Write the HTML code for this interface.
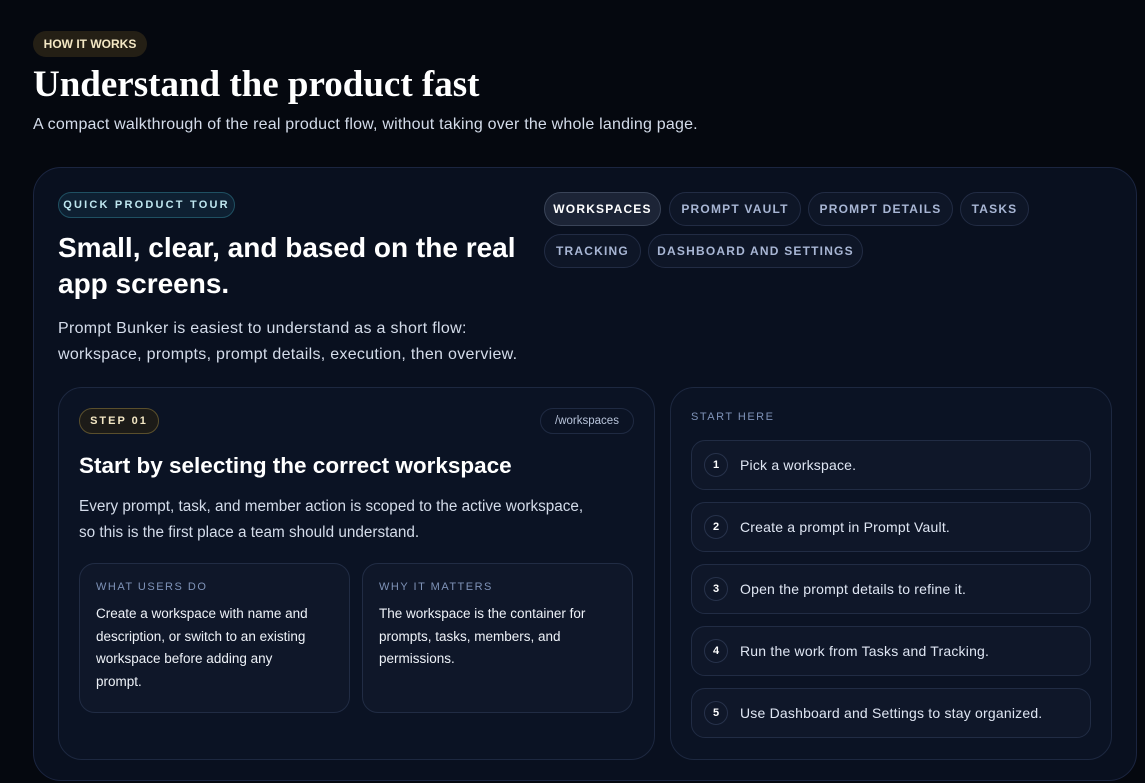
<!DOCTYPE html>
<html><head><meta charset="utf-8"><style>
*{margin:0;padding:0;box-sizing:border-box}
body{width:1145px;height:783px;overflow:hidden;background:#05080f;font-family:"Liberation Sans",sans-serif;color:#e6ebf5;position:relative}
.a{position:absolute}
.pill{position:absolute;border-radius:999px;font-weight:bold;text-transform:uppercase;display:flex;align-items:center;justify-content:center}
.tab{position:absolute;height:34px;border-radius:17px;border:1px solid #222c44;background:#0e1627;color:#a8b6d4;font-size:12px;font-weight:bold;letter-spacing:1.2px;display:flex;align-items:center;justify-content:center}
.item{position:absolute;left:20px;width:400px;height:50px;border:1px solid #212c44;border-radius:14px;background:#0f1729;display:flex;align-items:center;font-size:14px;color:#dfe6f3;letter-spacing:0.2px}
.num{width:24px;height:24px;border-radius:50%;border:1px solid #27324b;margin-left:12px;margin-right:12px;font-size:11px;font-weight:bold;display:flex;align-items:center;justify-content:center;color:#fff;letter-spacing:0}
.lbl{font-size:11px;letter-spacing:1.5px;color:#7f93b8}
.box{position:absolute;top:175px;width:271px;height:150px;border:1px solid #212c44;border-radius:16px;background:#0f1729;padding:17px 16px}
.box p{font-size:13.5px;line-height:22.7px;color:#eef2f8;margin-top:10px;width:232px}
</style></head><body>
<div class="pill" style="left:33px;top:31px;width:114px;height:26px;background:#241f15;color:#f3e7c4;font-size:12px">How it works</div>
<div class="a" style="left:33px;top:63px;font-family:'Liberation Serif',serif;font-size:37px;font-weight:bold;color:#fff">Understand the product fast</div>
<div class="a" style="left:33px;top:116px;font-size:16px;color:#d4dcea;letter-spacing:0.2px">A compact walkthrough of the real product flow, without taking over the whole landing page.</div>

<div class="a" style="left:33px;top:167px;width:1104px;height:614px;border:1px solid #1b2540;border-radius:28px;background:#09101f">
  <div class="pill" style="left:24px;top:24px;width:177px;height:26px;border:1px solid #1f5062;background:#0e2032;color:#bfe7f0;font-size:11px;letter-spacing:2.2px">Quick product tour</div>
  <div class="a" style="left:24px;top:62px;width:480px;font-size:28px;line-height:36px;font-weight:bold;color:#fff">Small, clear, and based on the real app screens.</div>
  <div class="a" style="left:24px;top:148px;font-size:16px;line-height:26px;color:#d4dcea;letter-spacing:0.3px">Prompt Bunker is easiest to understand as a short flow:<br>workspace, prompts, prompt details, execution, then overview.</div>

  <div class="tab" style="left:510px;top:24px;width:117px;background:#1c2436;border-color:#3a4458;color:#fff">WORKSPACES</div>
  <div class="tab" style="left:635px;top:24px;width:132px">PROMPT VAULT</div>
  <div class="tab" style="left:774px;top:24px;width:145px">PROMPT DETAILS</div>
  <div class="tab" style="left:926px;top:24px;width:69px">TASKS</div>
  <div class="tab" style="left:510px;top:66px;width:97px">TRACKING</div>
  <div class="tab" style="left:614px;top:66px;width:215px">DASHBOARD AND SETTINGS</div>

  <div class="a" style="left:24px;top:219px;width:597px;height:373px;border:1px solid #1d2840;border-radius:24px;background:#0b1324">
    <div class="pill" style="left:20px;top:20px;width:80px;height:26px;border:1px solid #5a4f2c;background:#1c1b18;color:#f3e7c4;font-size:11px;letter-spacing:2px">Step 01</div>
    <div class="pill" style="left:481px;top:20px;width:94px;height:26px;border:1px solid #1f2a42;color:#b8c4da;font-size:11.5px;font-weight:normal;text-transform:none">/workspaces</div>
    <div class="a" style="left:20px;top:65px;font-size:22.5px;font-weight:bold;color:#fff">Start by selecting the correct workspace</div>
    <div class="a" style="left:20px;top:106px;width:530px;font-size:15.3px;line-height:26px;color:#d4dcea">Every prompt, task, and member action is scoped to the active workspace,<br>so this is the first place a team should understand.</div>
    <div class="box" style="left:20px"><div class="lbl">WHAT USERS DO</div><p>Create a workspace with name and description, or switch to an existing workspace before adding any<br>prompt.</p></div>
    <div class="box" style="left:303px"><div class="lbl">WHY IT MATTERS</div><p>The workspace is the container for prompts, tasks, members, and permissions.</p></div>
  </div>

  <div class="a" style="left:636px;top:219px;width:442px;height:373px;border:1px solid #1d2840;border-radius:24px;background:#0b1324">
    <div class="a lbl" style="left:20px;top:23px">START HERE</div>
    <div class="item" style="top:52px"><div class="num">1</div>Pick a workspace.</div>
    <div class="item" style="top:114px"><div class="num">2</div>Create a prompt in Prompt Vault.</div>
    <div class="item" style="top:176px"><div class="num">3</div>Open the prompt details to refine it.</div>
    <div class="item" style="top:238px"><div class="num">4</div>Run the work from Tasks and Tracking.</div>
    <div class="item" style="top:300px"><div class="num">5</div>Use Dashboard and Settings to stay organized.</div>
  </div>
</div>
</body></html>
